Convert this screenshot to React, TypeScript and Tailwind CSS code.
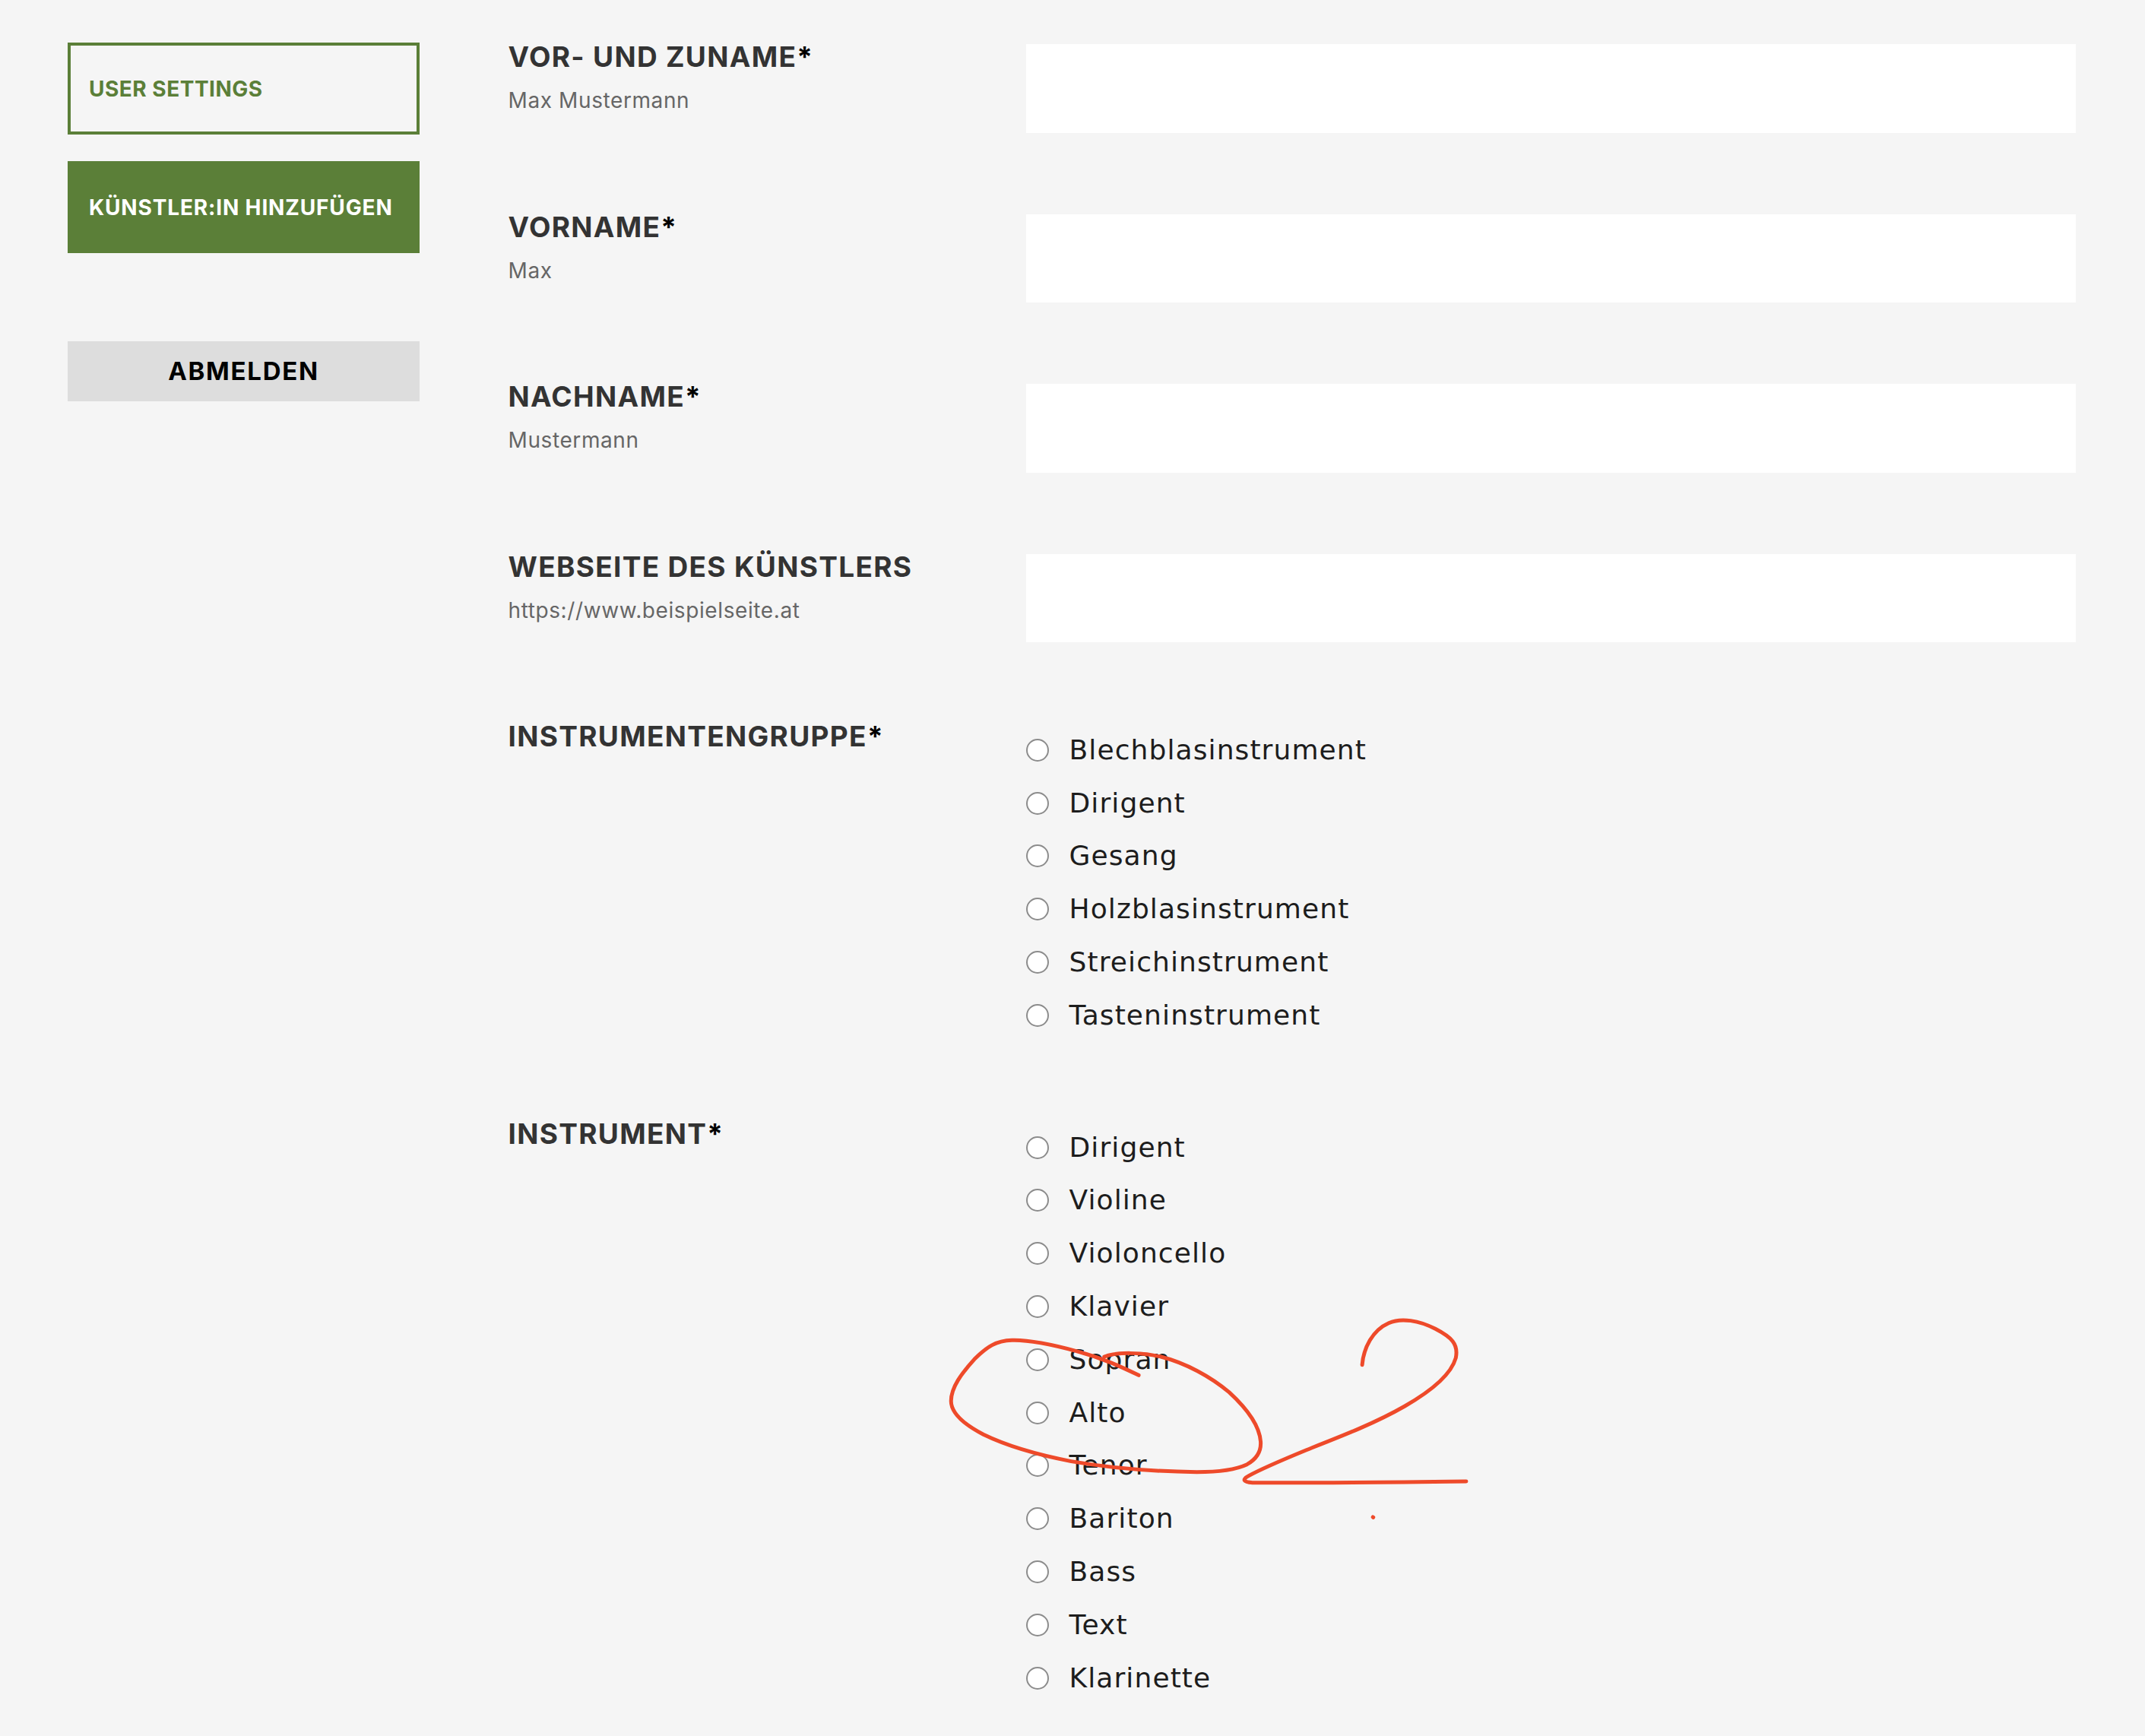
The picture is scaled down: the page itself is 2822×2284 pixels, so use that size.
import React from 'react';

const textFields = [
  { label: 'VOR- UND ZUNAME', required: true, hint: 'Max Mustermann' },
  { label: 'VORNAME', required: true, hint: 'Max' },
  { label: 'NACHNAME', required: true, hint: 'Mustermann' },
  { label: 'WEBSEITE DES KÜNSTLERS', required: false, hint: 'https://www.beispielseite.at' },
];

const groups = ['Blechblasinstrument', 'Dirigent', 'Gesang', 'Holzblasinstrument', 'Streichinstrument', 'Tasteninstrument'];
const instruments = ['Dirigent', 'Violine', 'Violoncello', 'Klavier', 'Sopran', 'Alto', 'Tenor', 'Bariton', 'Bass', 'Text', 'Klarinette'];

const Label = ({ text, required }: { text: string; required?: boolean }) => (
  <h3 className="-mt-[5px] text-[37px] leading-[44px] font-bold tracking-[1.3px] text-[#333333]">
    {text}
    {required && <span className="text-black">*</span>}
  </h3>
);

const RadioList = ({ name, items }: { name: string; items: string[] }) => (
  <div className="flex flex-col">
    {items.map((item) => (
      <label key={item} className="flex h-[69.8px] items-center gap-[27px]">
        <input
          type="radio"
          name={name}
          className="h-[30px] w-[30px] appearance-none rounded-full border-[2.5px] border-[#8c8c8c] bg-white"
        />
        <span className="font-['DejaVu_Sans',sans-serif] text-[36px] tracking-[1.1px] text-[#1d1d1d]">{item}</span>
      </label>
    ))}
  </div>
);

export default function App() {
  return (
    <div className="relative flex min-h-screen bg-[#f5f5f5] font-['Inter',sans-serif]">
      {/* Sidebar */}
      <aside className="ml-[89px] flex w-[463px] shrink-0 flex-col pt-[56px]">
        <button className="flex h-[121px] items-center border-[4.5px] border-[#5b7f38] px-[24px] text-[28px] font-bold tracking-[0.5px] text-[#5b7f38]">
          USER SETTINGS
        </button>
        <button className="mt-[35px] flex h-[121px] items-center bg-[#5b7f38] px-[28px] text-[28px] font-bold tracking-[0.85px] whitespace-nowrap text-white">
          KÜNSTLER:IN HINZUFÜGEN
        </button>
        <button className="mt-[116px] h-[79px] bg-[#dddddd] text-[33px] font-bold tracking-[1.7px] text-black">ABMELDEN</button>
      </aside>

      {/* Form */}
      <main className="ml-[116.5px] flex flex-1 flex-col pt-[58px] pr-[91px]">
        <div className="flex flex-col gap-[107px]">
          {textFields.map((f) => (
            <div key={f.label} className="flex">
              <div className="w-[681px] shrink-0">
                <Label text={f.label} required={f.required} />
                <p className="mt-[18px] text-[28px] leading-[34px] tracking-[0.6px] text-[#666666]">{f.hint}</p>
              </div>
              <input type="text" className="h-[116.5px] flex-1 bg-white" />
            </div>
          ))}
        </div>

        <div className="mt-[107px] flex">
          <div className="w-[681px] shrink-0">
            <Label text="INSTRUMENTENGRUPPE" required />
          </div>
          <RadioList name="gruppe" items={groups} />
        </div>

        <div className="mt-[104px] flex">
          <div className="w-[681px] shrink-0">
            <Label text="INSTRUMENT" required />
          </div>
          <RadioList name="instrument" items={instruments} />
        </div>
      </main>

      {/* Handwritten annotation over the radio list */}
      <svg
        className="pointer-events-none absolute top-[1700px] left-[1230px] h-[320px] w-[740px]"
        viewBox="0 0 1568 960"
        preserveAspectRatio="none"
        fill="none"
        stroke="#ee4a2a"
        strokeWidth="5"
        strokeLinecap="round"
        strokeLinejoin="round"
      >
        <path
          vectorEffect="non-scaling-stroke"
          d="M568 328C520 295 470 262 400 235C330 208 265 188 215 190C170 192 145 215 110 265C75 320 45 375 45 430C45 480 85 525 135 562C190 600 260 635 380 668C470 690 600 708 730 710C790 710 840 700 870 680C895 660 910 630 908 590C905 530 870 460 820 395C770 335 700 280 630 255C575 238 510 235 472 255"
        />
        <path
          vectorEffect="non-scaling-stroke"
          d="M1191 287C1195 220 1220 150 1265 122C1300 100 1350 112 1395 145C1440 178 1460 205 1452 260C1440 320 1390 385 1310 450C1230 515 1140 565 1050 615C990 650 920 690 875 725C855 740 860 750 885 752C1000 754 1300 750 1481 747"
        />
        <path vectorEffect="non-scaling-stroke" d="M1221 888L1222 889" />
      </svg>
    </div>
  );
}
